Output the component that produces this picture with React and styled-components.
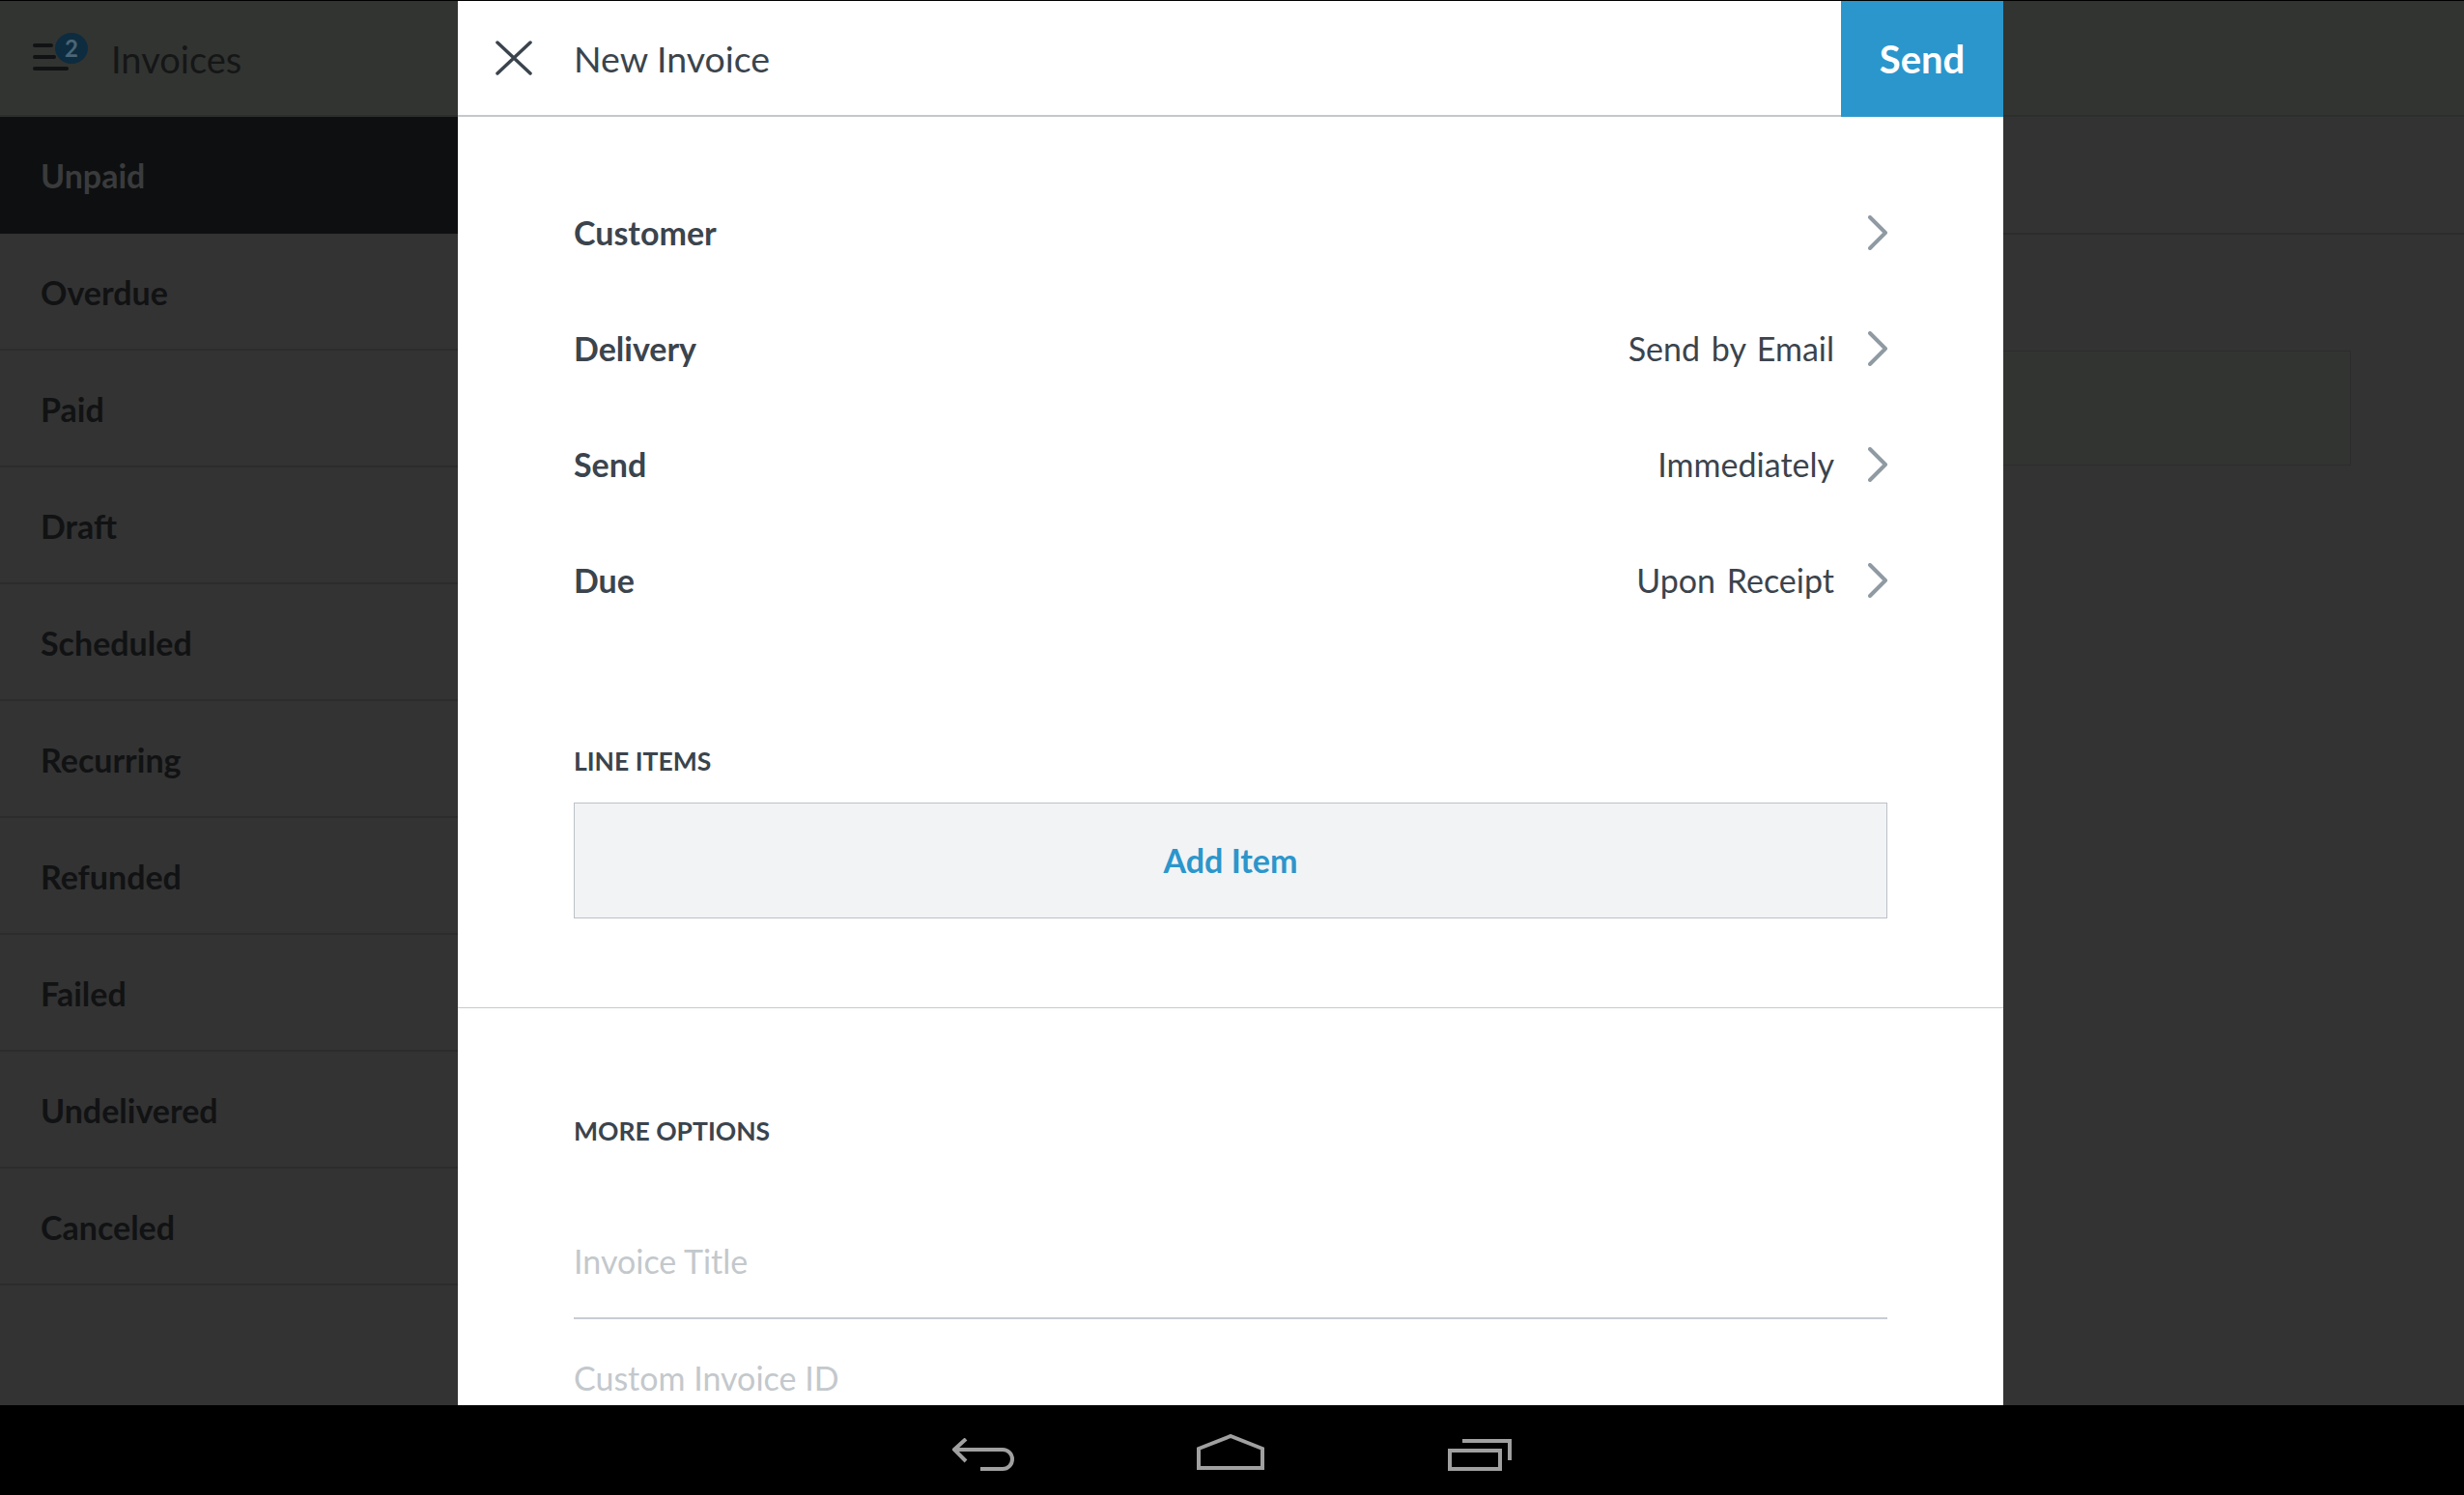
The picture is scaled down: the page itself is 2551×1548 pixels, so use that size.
import React from 'react';
import styled, { createGlobalStyle } from 'styled-components';

const Global = createGlobalStyle`
  html, body { margin: 0; padding: 0; background: #000; }
  * { box-sizing: border-box; }
`;

const Page = styled.div`
  width: 2551px;
  height: 1548px;
  display: flex;
  flex-direction: column;
  font-family: Lato, "Open Sans", sans-serif;
  background: #000;
  overflow: hidden;
`;

const Screen = styled.div`
  position: relative;
  height: 1454px;
  margin-top: 1px;
  background: #333333;
  overflow: hidden;
`;

const TopBar = styled.header`
  height: 120px;
  display: flex;
  align-items: center;
  padding-left: 34px;
  background: #323432;
  border-bottom: 2px solid #2c2d2d;
`;

const MenuButton = styled.div`
  position: relative;
  width: 81px;
  height: 60px;
`;

const MenuIcon = styled.svg`
  display: block;
  margin-top: 15px;
  fill: none;
  stroke: #111213;
  stroke-width: 4;
  stroke-linecap: round;
`;

const Badge = styled.span`
  position: absolute;
  left: 23px;
  top: 4px;
  width: 34px;
  height: 32px;
  border-radius: 50%;
  background: #0d2c3f;
  color: #4a6575;
  font-size: 24px;
  font-weight: 700;
  line-height: 32px;
  text-align: center;
`;

const TopTitle = styled.div`
  padding-top: 2px;
  font-size: 38px;
  color: #151616;
`;

const Body = styled.div`
  display: flex;
  height: 1333px;
`;

const Sidebar = styled.nav`
  width: 474px;
  flex-shrink: 0;
`;

const SideRow = styled.div`
  height: 121px;
  display: flex;
  align-items: center;
  padding: 2px 0 0 42px;
  font-size: 34px;
  font-weight: 700;
  background: ${(p) => (p.$active ? '#0e0f10' : 'transparent')};
  color: ${(p) => (p.$active ? '#3a3b3c' : '#111213')};
  border-bottom: 2px solid ${(p) => (p.$active ? '#0e0f10' : '#2c2c2c')};
`;

const Main = styled.main`
  flex: 1;
`;

const MainStrip = styled.div`
  height: 122px;
  border-bottom: 2px solid #2c2c2c;
`;

const MainCard = styled.div`
  width: 1960px;
  height: 119px;
  margin-top: 120px;
  background: #323432;
  border: 1px solid #2c2c2c;
`;

const Modal = styled.section`
  position: absolute;
  left: 474px;
  top: 0;
  width: 1600px;
  height: 1454px;
  background: #fff;
  overflow: hidden;
`;

const ModalHead = styled.div`
  height: 120px;
  display: flex;
  align-items: stretch;
  border-bottom: 2px solid #c3c8cc;
  color: #3b444d;
`;

const CloseBox = styled.div`
  width: 120px;
  padding-right: 5px;
  display: flex;
  align-items: center;
  justify-content: center;
`;

const ModalTitle = styled.div`
  flex: 1;
  display: flex;
  align-items: center;
  padding-top: 1px;
  font-size: 37.5px;
`;

const SendButton = styled.div`
  width: 168px;
  height: 120px;
  background: #2b96cc;
  color: #fff;
  font-size: 40px;
  font-weight: 700;
  display: flex;
  align-items: center;
  justify-content: center;
`;

const Content = styled.div`
  padding: ${(p) => p.$top}px 120px 0;
`;

const FieldRow = styled.div`
  height: 120px;
  display: flex;
  align-items: center;
  color: #3b444d;
  font-size: 34px;
`;

const FieldLabel = styled.div`
  flex: 1;
  padding-bottom: 2px;
  font-weight: 700;
`;

const FieldValue = styled.div`
  margin-right: 35px;
  padding-bottom: 2px;
  word-spacing: 3px;
`;

const SectionLabel = styled.div`
  margin-top: ${(p) => p.$top || 0}px;
  font-size: 26.5px;
  font-weight: 700;
  color: #3b444d;
  line-height: 32px;
`;

const AddItem = styled.div`
  height: 120px;
  margin-top: 27px;
  padding-bottom: 2px;
  display: flex;
  align-items: center;
  justify-content: center;
  background: #f2f3f5;
  border: 1px solid #bcc1c6;
  color: #2b96cc;
  font-size: 34px;
  font-weight: 700;
`;

const Divider = styled.div`
  height: 1px;
  margin-top: 92px;
  background: #c6c9cc;
`;

const InputRow = styled.div`
  height: 120px;
  margin-top: ${(p) => p.$top || 0}px;
  display: flex;
  align-items: center;
  color: #c3c8cc;
  font-size: 34px;
  border-bottom: ${(p) => (p.$line ? '2px solid #c8ccd2' : 'none')};
`;

const NavBar = styled.footer`
  flex: 1;
  display: flex;
  justify-content: center;
  align-items: flex-start;
  padding-top: 34px;
  background: #000;
`;

const NavIcon = styled.svg`
  display: block;
  fill: none;
  stroke: #a0a0a0;
  stroke-width: 4;
  margin: ${(p) => p.$margin || '0'};
`;

const ChevronIcon = styled.svg`
  display: block;
  fill: none;
  stroke: #8f9aa2;
  stroke-width: 4;
  stroke-linecap: round;
  stroke-linejoin: round;
`;

const CloseIcon = styled.svg`
  display: block;
  fill: none;
  stroke: #3b444d;
  stroke-width: 3.5;
  stroke-linecap: round;
`;

const Chevron = () => (
  <ChevronIcon width="20" height="36" viewBox="0 0 20 36">
    <path d="M2 2 L18 18 L2 34" />
  </ChevronIcon>
);

const items = ['Unpaid', 'Overdue', 'Paid', 'Draft', 'Scheduled', 'Recurring', 'Refunded', 'Failed', 'Undelivered', 'Canceled'];

const fields = [
  { label: 'Customer' },
  { label: 'Delivery', value: 'Send by Email' },
  { label: 'Send', value: 'Immediately' },
  { label: 'Due', value: 'Upon Receipt' },
];

export default function App() {
  return (
    <Page>
      <Global />
      <Screen>
        <TopBar>
          <MenuButton>
            <MenuIcon width="38" height="30" viewBox="0 0 38 30">
              <path d="M2 2 H19 M2 14 H22 M2 26 H35" />
            </MenuIcon>
            <Badge>2</Badge>
          </MenuButton>
          <TopTitle>Invoices</TopTitle>
        </TopBar>
        <Body>
          <Sidebar>
            {items.map((item, i) => (
              <SideRow key={item} $active={i === 0}>{item}</SideRow>
            ))}
          </Sidebar>
          <Main>
            <MainStrip />
            <MainCard />
          </Main>
        </Body>
        <Modal>
          <ModalHead>
            <CloseBox>
              <CloseIcon width="38" height="36" viewBox="0 0 38 36">
                <path d="M2 2 L36 34 M36 2 L2 34" />
              </CloseIcon>
            </CloseBox>
            <ModalTitle>New Invoice</ModalTitle>
            <SendButton>Send</SendButton>
          </ModalHead>
          <Content $top={60}>
            {fields.map((f) => (
              <FieldRow key={f.label}>
                <FieldLabel>{f.label}</FieldLabel>
                {f.value && <FieldValue>{f.value}</FieldValue>}
                <Chevron />
              </FieldRow>
            ))}
            <SectionLabel $top={111}>LINE ITEMS</SectionLabel>
            <AddItem>Add Item</AddItem>
          </Content>
          <Divider />
          <Content $top={111}>
            <SectionLabel>MORE OPTIONS</SectionLabel>
            <InputRow $line $top={59}>Invoice Title</InputRow>
            <InputRow>Custom Invoice ID</InputRow>
          </Content>
        </Modal>
      </Screen>
      <NavBar>
        <NavIcon width="66" height="36" viewBox="0 0 66 36">
          <path d="M14 1 L2 12 L14 24 M2 12 H52 A10 10 0 0 1 52 32 H29" />
        </NavIcon>
        <NavIcon width="72" height="38" viewBox="0 0 72 38" $margin="-4px 0 0 186px">
          <path d="M3 35 V15 L36 2 L69 15 V35 Z" />
        </NavIcon>
        <NavIcon width="68" height="36" viewBox="0 0 68 36" $margin="0 0 0 188px">
          <path d="M3 13 H55 V32 H3 Z M16 3 H65 V23" />
        </NavIcon>
      </NavBar>
    </Page>
  );
}
